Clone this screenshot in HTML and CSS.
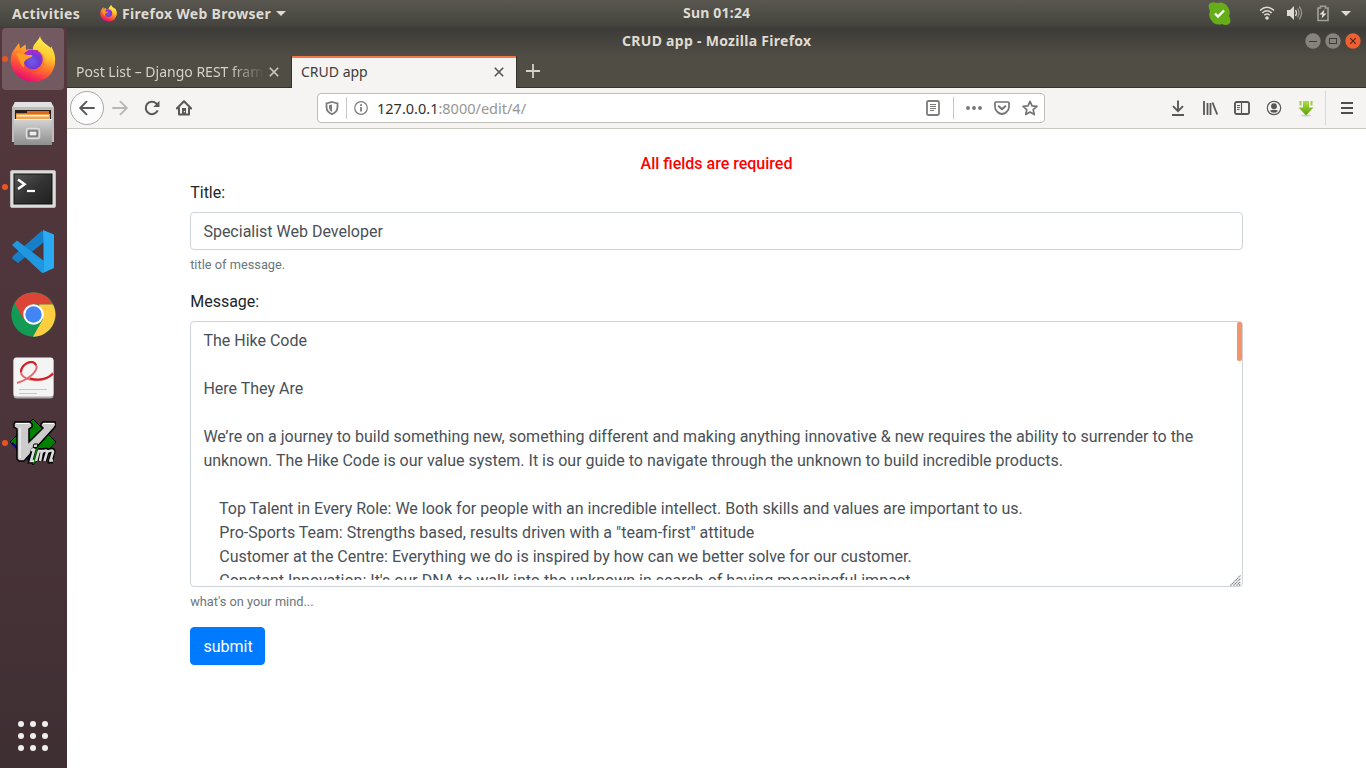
FILE: index.html
```html
<!DOCTYPE html>
<html lang="en">
<head>
<meta charset="utf-8">
<title>CRUD app</title>
<link rel="stylesheet" href="styles.css">
</head>
<body>
<svg class="defs" width="0" height="0">
  <defs>
    <linearGradient id="foxBody" x1="0.8" y1="0" x2="0.3" y2="1"><stop offset="0" stop-color="#fff44f"/><stop offset=".3" stop-color="#ffa52b"/><stop offset=".65" stop-color="#ff5534"/><stop offset="1" stop-color="#e8017d"/></linearGradient>
    <linearGradient id="foxTail" x1=".6" y1="0" x2=".4" y2="1"><stop offset="0" stop-color="#fff352"/><stop offset=".5" stop-color="#ffc92e"/><stop offset=".8" stop-color="#ff7a2a"/><stop offset="1" stop-color="#ff4a42"/></linearGradient>
    <radialGradient id="foxGlobe" cx=".45" cy=".6" r=".65"><stop offset="0" stop-color="#6b5cf2"/><stop offset=".6" stop-color="#7138cf"/><stop offset="1" stop-color="#a834c8"/></radialGradient>
    <linearGradient id="silver" x1="0" y1="0" x2="0" y2="1"><stop offset="0" stop-color="#d4d4d4"/><stop offset="1" stop-color="#8e8e8e"/></linearGradient>
    <linearGradient id="termFill" x1="0" y1="0" x2="1" y2="1"><stop offset="0" stop-color="#555"/><stop offset=".5" stop-color="#333"/><stop offset="1" stop-color="#202020"/></linearGradient>
    <linearGradient id="greenArrow" x1="0" y1="0" x2="0" y2="1"><stop offset="0" stop-color="#a9e03e"/><stop offset="1" stop-color="#5f9e0c"/></linearGradient>
    <symbol id="firefox" viewBox="0 0 46 48">
      <path fill="url(#foxBody)" d="M3 16 L9 8 L10 13.500 L15.500 9.500 L16 15 Q23 12 28 18 L29 9 L40 12 C47 21 47 34 38 42 C29 49 16 48 8 41 C0 34-1 24 3 16Z"/>
      <path fill="url(#foxTail)" d="M30 1 C29 6 22 9 23 15 C32 14 37 22 34 29 C32 36 26 38 20 37 C32 45 44 38 45 27 C46 20 43 15 41 11 L41 15 C39 9 31 8 30 1Z"/>
      <circle cx="23" cy="24.500" r="9.800" fill="url(#foxGlobe)"/>
      <path fill="#ff9d22" d="M6 19 C10 16 14 20 22 20 C24 22 18 23 16 25 C13 27 14 30 14 33 C9 29 9 22 6 19Z"/>
      <path fill="#a32bd2" d="M14 19 Q18 13 24 15 Q31 17 28 21 Q22 16 19 20Z"/>
    </symbol>
  </defs>
</svg>

<header class="topbar">
  <span class="activities">Activities</span>
  <div class="app-menu">
    <svg width="17" height="18"><use href="#firefox"/></svg>
    <span class="app-name">Firefox Web Browser</span>
    <i class="caret"></i>
  </div>
  <span class="clock">Sun 01:24</span>
  <div class="tray">
    <svg class="skype" width="23" height="23" viewBox="0 0 23 23"><path fill="#65ad19" d="M1 2 Q4-1 9 1 Q16-1 20 5 Q23 10 21 14 Q24 19 21 22 Q18 24 14 22 Q7 24 3 18 Q0 14 2 9 Q0 6 1 2Z"/><path d="M7 11.500 10 14.500 16 8.500" fill="none" stroke="#fff" stroke-width="2.400"/></svg>
    <svg class="wifi" width="16" height="16" viewBox="0 0 16 16" fill="none" stroke="#dfdcd6" stroke-width="1.500"><path d="M1 5.500Q8-1 15 5.500M3.300 8Q8 3.600 12.700 8M5.300 10.300Q8 7.800 10.700 10.300"/><circle cx="8" cy="13" r="1.800" fill="#dfdcd6" stroke="none"/></svg>
    <svg class="sound" width="17" height="16" viewBox="0 0 17 16"><path fill="#dfdcd6" d="M1 5H4L8 1V15L4 11H1Z"/><path fill="none" stroke="#dfdcd6" stroke-width="1.300" d="M9.500 5Q11.500 8 9.500 11"/><path fill="none" stroke="#98958d" stroke-width="1.300" d="M11.500 3.500Q14.500 8 11.500 12.500M13.300 1.500Q18 8 13.300 14.500"/></svg>
    <svg class="battery" width="14" height="17" viewBox="0 0 14 17"><path fill="none" stroke="#a3a099" stroke-width="1.600" d="M2 3H4.500V1.200H9.500V3H12V15.500H2Z"/><path fill="#e8e5df" d="M8.500 4.500 3.500 9.500H6.500L5.500 13.500 10.500 8.500H7.500Z"/></svg>
    <i class="caret"></i>
  </div>
</header>

<div class="desktop">
  <nav class="dock">
    <div class="slot active running"><svg width="46" height="48"><use href="#firefox"/></svg></div>
    <div class="slot files">
      <svg width="42" height="44" viewBox="0 0 42 44"><path fill="#bdbdbd" d="M3 0H39L42 5V40H0V5Z"/><path fill="#e2e2e2" d="M3 0H39L41 5H1Z"/><rect x="3" y="8" width="36" height="10" fill="#2a211c"/><path fill="#d76b22" d="M4 11H15V9H37V17H4Z"/><path fill="#f6a44c" d="M4 12H38V17H4Z"/><path fill="#fff" d="M5 13.200H37V14.400H5Z"/><rect x="2" y="17" width="38" height="26" fill="url(#silver)"/><path fill="#eee" d="M2 17H40V18H2Z"/><rect x="14.500" y="26.500" width="13" height="10" rx="2" fill="#aaa" stroke="#ddd" stroke-width="1.500"/><rect x="17" y="29" width="8" height="5" fill="#eee" stroke="#555"/></svg>
    </div>
    <div class="slot running terminal">
      <svg width="46" height="38" viewBox="0 0 46 38"><rect x=".5" y=".5" width="45" height="37" rx="1.500" fill="#dcdcdc" stroke="#b9b9b9"/><rect x="4" y="4" width="38" height="30" fill="url(#termFill)" stroke="#111"/><path d="M8 9.500 14.500 14.300 8 19" fill="none" stroke="#fff" stroke-width="2.600"/><path d="M17 21H25" stroke="#fff" stroke-width="2.200"/></svg>
    </div>
    <div class="slot">
      <svg width="42" height="43" viewBox="0 0 42 43"><path fill="#1580c8" d="M30 .5 34 6 32 12 6 33 0 28.500 1 26Z"/><path fill="#2aaaf2" d="M31 0 42 4.500V38L31 43 31.500 32V12Z"/><path fill="#1f97e1" d="M0 15 5 10.500 32 31 31 43Q30 43 29 42Z"/></svg>
    </div>
    <div class="slot">
      <svg width="45" height="45" viewBox="0 0 45 45"><circle cx="22.500" cy="22.500" r="22.200" fill="#129b54"/><path fill="#dc4437" d="M3.500 11 A22.200 22.200 0 0 1 42 12.500H22.500L13 28Z"/><path fill="#ffcd40" d="M42 12.500 A22.200 22.200 0 0 1 22 44.700L32 27 28 12.500Z"/><circle cx="22.500" cy="22.500" r="10.300" fill="#fff"/><circle cx="22.500" cy="22.500" r="8.200" fill="#4285f4"/></svg>
    </div>
    <div class="slot">
      <svg width="41" height="42" viewBox="0 0 41 42"><rect x=".5" y="1.500" width="40" height="40" rx="3" fill="#aaa"/><rect x=".5" y=".5" width="40" height="39" rx="3" fill="#f4f4f4"/><path d="M4 26C17 22 26 13 23 8C20 2 10 6 8 14C7 20 16 24 26 23Q35 22 40 16" fill="none" stroke="#e3686b" stroke-width="2"/><path d="M8 15C8 7 20 1 23 8M17 21.500Q31 25 40 17" fill="none" stroke="#cd2026" stroke-width="2"/><path d="M6 32.500H34M6 36.500H24" stroke="#c5c5c5"/></svg>
    </div>
    <div class="slot running">
      <svg width="46" height="48" viewBox="0 0 46 48"><path fill="#008000" stroke="#000" d="M23 1 46 24 23 47 0 24Z"/><path fill="none" stroke="#0a0a78" stroke-width="2.500" d="M2 25 23 45.500"/><path fill="#ccc" stroke="#000" stroke-width="1.500" d="M5 4H20L22 6V9L19 11V24L33 10 31 8V6L33 4H45L46 7 44 10 14 43H9L7 41V11L4 9V6Z"/><path fill="none" stroke="#fff" d="M6 5.500H19M10 10V40M33 5.500H44"/><g fill="none" stroke="#000" stroke-width="5"><path d="M23.500 31 20.500 43H23M27 43 30 32.500H33L30 43M32 34Q37 30 37 34L34.500 43M37 34Q43 30 43 34L40.500 43H43"/></g><g fill="none" stroke="#ddd" stroke-width="2.600"><path d="M21 32H24L21 43H24M26 43 29 32.500M28 33H32L30 43M32 34Q37 31 37 34L34.500 43M37 34Q43 31 43 34L40.500 42.500H43"/></g><path fill="#ddd" stroke="#000" d="M24 26H28L27 29.500H23Z"/></svg>
    </div>
    <div class="apps-grid"><i></i><i></i><i></i><i></i><i></i><i></i><i></i><i></i><i></i></div>
  </nav>

  <main class="window">
    <div class="titlebar">
      <span class="title">CRUD app - Mozilla Firefox</span>
      <div class="controls">
        <svg width="16" height="16" viewBox="0 0 16 16"><circle cx="8" cy="8" r="7.700" fill="#85837c"/><path d="M4 8.500H12" stroke="#3c3b37"/></svg>
        <svg width="16" height="16" viewBox="0 0 16 16"><circle cx="8" cy="8" r="7.700" fill="#85837c"/><rect x="4.500" y="5.500" width="7" height="5" fill="none" stroke="#3c3b37"/></svg>
        <svg width="16" height="16" viewBox="0 0 16 16"><circle cx="8" cy="8" r="7.700" fill="#ee5f31"/><path d="M5.200 5.200 10.800 10.800M10.800 5.200 5.200 10.800" stroke="#4b2a1e" stroke-width="1.200"/></svg>
      </div>
    </div>
    <div class="tabs">
      <div class="tab"><span class="tab-text faded">Post List – Django REST fram</span><svg width="10" height="10" viewBox="0 0 10 10"><path d="M.8.8 9.200 9.200M9.200.8.8 9.200" stroke="#cfccc4" stroke-width="1.600"/></svg></div>
      <div class="tab current"><span class="tab-text">CRUD app</span><svg width="10" height="10" viewBox="0 0 10 10"><path d="M.8.8 9.200 9.200M9.200.8.8 9.200" stroke="#55544f" stroke-width="1.600"/></svg></div>
      <svg class="plus" width="14" height="14" viewBox="0 0 14 14"><path d="M7 0V14M0 7H14" stroke="#d5d2ca" stroke-width="1.800"/></svg>
    </div>
    <div class="toolbar">
      <div class="back"><svg width="16" height="16" viewBox="0 0 16 16" fill="none" stroke="#585856" stroke-width="1.900" stroke-linecap="round" stroke-linejoin="round"><path d="M15 8H1.500M7.500 1.700 1.200 8 7.500 14.300"/></svg></div>
      <svg width="16" height="16" viewBox="0 0 16 16" fill="none" stroke="#b8b8b6" stroke-width="1.900" stroke-linecap="round" stroke-linejoin="round"><path d="M1 8H14.500M8.500 1.700 14.800 8 8.500 14.300"/></svg>
      <svg width="16" height="16" viewBox="0 0 16 16"><path d="M13.700 10.300A6.200 6.200 0 1 1 12.300 3.500L14 5" fill="none" stroke="#585856" stroke-width="2"/><path d="M15.500.8V7H9.300Z" fill="#585856"/></svg>
      <svg width="16" height="16" viewBox="0 0 16 16"><path d="M.8 8.500 8 1.200 15.200 8.500M3 8V14.500H13V8" fill="none" stroke="#585856" stroke-width="2" stroke-linecap="round" stroke-linejoin="round"/><path d="M6 8H10V14H6Z" fill="#585856"/><path d="M7.800 11H9V12.300H7.800Z" fill="#f5f4f2"/></svg>
      <div class="urlbar">
        <svg width="14" height="14" viewBox="0 0 14 14"><path d="M7 1 12.500 2.500V6Q12.500 11 7 13.200Q1.500 11 1.500 6V2.500Z" fill="none" stroke="#7c7c7a" stroke-width="1.800"/><path fill="#7c7c7a" d="M7 3.500V11Q4 9.500 4 6V4.300Z"/></svg>
        <i class="rule"></i>
        <svg width="14" height="14" viewBox="0 0 14 14"><circle cx="7" cy="7" r="6.300" fill="none" stroke="#7c7c7a" stroke-width="1.200"/><path d="M7 6V10.500M7 3.300V4.900" stroke="#7c7c7a" stroke-width="1.800"/></svg>
        <span class="url"><b>127.0.0.1</b>:8000/edit/4/</span>
        <div class="page-actions">
          <svg width="14" height="16" viewBox="0 0 14 16"><rect x="1" y="1" width="12" height="14" rx="1.500" fill="none" stroke="#7c7c7a" stroke-width="1.800"/><path d="M4 4.500H10M4 6.500H10M4 8.500H10M4 10.500H8" stroke="#7c7c7a"/></svg>
          <i class="rule"></i>
          <svg class="dots" width="16" height="4" viewBox="0 0 16 4" fill="#747472"><circle cx="2" cy="2" r="1.900"/><circle cx="8" cy="2" r="1.900"/><circle cx="14" cy="2" r="1.900"/></svg>
          <svg width="16" height="14" viewBox="0 0 16 14" fill="none" stroke="#747472" stroke-linecap="round" stroke-linejoin="round"><path d="M2 1H14Q15 1 15 2V6Q15 9 12.500 11Q8 15 3.500 11Q1 9 1 6V2Q1 1 2 1Z" stroke-width="1.700"/><path d="M4.700 5.200 8 8.300 11.300 5.200" stroke-width="2"/></svg>
          <svg width="16" height="16" viewBox="0 0 16 16"><path d="M8 1.300 10 5.800 15 6.300 11.200 9.600 12.300 14.600 8 12 3.700 14.600 4.800 9.600 1 6.300 6 5.800Z" fill="none" stroke="#747472" stroke-width="1.700" stroke-linejoin="round"/></svg>
        </div>
      </div>
      <div class="tools">
        <svg width="16" height="16" viewBox="0 0 16 16" fill="none" stroke="#585856" stroke-width="1.900"><path d="M8 .5V11M3 6.200 8 11.200 13 6.200M2 15H14"/></svg>
        <svg width="16" height="16" viewBox="0 0 16 16" fill="none" stroke="#585856" stroke-width="1.800"><path d="M2 1V15M5.500 3V15M8.500 3V15M10.500 2.500 15.200 14.500"/></svg>
        <svg width="16" height="14" viewBox="0 0 16 14" fill="none" stroke="#585856"><rect x="1" y="1" width="14" height="12" rx="1.800" stroke-width="1.900"/><path d="M7.500 1V13M3 4.500H6M3 6.500H6M3 8.500H5.500" stroke-width="1.200"/></svg>
        <svg width="16" height="16" viewBox="0 0 16 16"><circle cx="8" cy="8" r="6.700" fill="none" stroke="#585856" stroke-width="1.200"/><circle cx="8" cy="6.200" r="2.900" fill="#585856"/><path d="M4 10.800Q8 8.500 12 10.800Q11 12.800 8 12.800T4 10.800Z" fill="#585856"/></svg>
        <svg width="16" height="17" viewBox="0 0 16 17"><ellipse cx="8" cy="15.500" rx="5" ry="1" fill="#ccc"/><path d="M5 1H11V7.500H15.500L8 15.500.5 7.500H5Z" fill="url(#greenArrow)"/><path d="M1.500 1H3.500V5.500H1.500ZM12.500 1H14.500V5.500H12.500Z" fill="#9bd03b"/></svg>
        <i class="rule tall"></i>
        <svg width="12" height="12" viewBox="0 0 12 12" stroke="#4e4e4c" stroke-width="2"><path d="M0 1H12M0 6H12M0 11H12"/></svg>
      </div>
    </div>

    <form class="page">
      <strong class="error">All fields are required</strong>
      <div class="group">
        <label>Title:</label>
        <div class="field">Specialist Web Developer</div>
        <small>title of message.</small>
      </div>
      <div class="group">
        <label>Message:</label>
        <div class="field area"><div class="area-text">The Hike Code

Here They Are

We’re on a journey to build something new, something different and making anything innovative &amp; new requires the ability to surrender to the
unknown. The Hike Code is our value system. It is our guide to navigate through the unknown to build incredible products.

    Top Talent in Every Role: We look for people with an incredible intellect. Both skills and values are important to us.
    Pro-Sports Team: Strengths based, results driven with a "team-first" attitude
    Customer at the Centre: Everything we do is inspired by how can we better solve for our customer.
    Constant Innovation: It's our DNA to walk into the unknown in search of having meaningful impact.</div>
          <i class="thumb"></i>
          <svg class="grip" width="11" height="11" viewBox="0 0 11 11" stroke="#777" stroke-width="1.100" stroke-dasharray="1.400 .5"><path d="M.5 10.500 10.500.5M3.500 10.500 10.500 3.500M6.500 10.500 10.500 6.500M9 10.500 10.500 9"/></svg>
        </div>
        <small>what's on your mind...</small>
      </div>
      <button type="button" class="submit">submit</button>
    </form>
  </main>
</div>
</body>
</html>
```
FILE: styles.css
```css
* { box-sizing: border-box; }
body { margin: 0; width: 1366px; height: 768px; overflow: hidden; background: #fff; font-family: "Noto Sans", sans-serif; }
svg { display: block; flex: none; }
.defs { position: absolute; }

.topbar {
  height: 28px; padding: 0 15px 2px 12px; display: grid; grid-template-columns: 88px 583px 1fr auto; align-items: center;
  background: linear-gradient(#595750, #45443e 90%, #3e3d38);
  color: #dfdbd2; font-weight: 700; font-size: 14px; line-height: 20px; white-space: nowrap;
}
.activities { letter-spacing: .3px; padding-top: 1px; }
.app-menu { display: flex; align-items: center; }
.app-name { margin-left: 5px; width: 149px; padding-top: 1px; letter-spacing: .3px; }
.clock { letter-spacing: .2px; }
.caret { border: 5px solid transparent; border-top-color: #dfdbd2; border-bottom: 0; margin-left: 5px; }
.tray { display: flex; align-items: center; }
.wifi { margin-left: 28px; }
.sound { margin-left: 11px; }
.battery { margin-left: 13px; }
.tray .caret { margin-left: 11px; }

.desktop { display: flex; height: 740px; }
.dock { width: 67px; flex: none; display: flex; flex-direction: column; background: linear-gradient(#54383d, #4b343a 55%, #3e2f33); }
.slot { position: relative; width: 62px; height: 62px; margin: 0 0 2px 2px; border-radius: 4px; display: flex; align-items: center; justify-content: center; }
.slot.active { background: #735a60; }
.slot.files { padding-top: 1px; }
.slot.terminal { padding-top: 4px; }
.slot:nth-child(n+5) { padding-bottom: 2px; }
.running::before { content: ""; position: absolute; left: 0; top: 28px; width: 6px; height: 6px; border-radius: 50%; background: #e95420; }
.apps-grid { margin: auto 0 17px 18px; display: grid; grid-template-columns: repeat(3, 6px); gap: 6px; }
.apps-grid i { width: 6px; height: 6px; border-radius: 50%; background: #f1efee; }

.window { flex: 1; min-width: 0; display: flex; flex-direction: column; }
.titlebar { height: 28px; display: grid; grid-template-columns: 1fr auto; align-items: center; background: linear-gradient(#3c3b37, #4f4c44); padding: 0 5px 2px 555px; color: #dfdbd2; font-weight: 700; font-size: 14px; line-height: 20px; letter-spacing: .29px; }
.controls { display: flex; gap: 4px; }
.tabs { height: 32px; display: flex; background: #504d45; border-bottom: 1px solid #33322e; }
.tab { width: 224px; height: 32px; display: flex; align-items: center; justify-content: space-between; padding: 0 12px 0 9px; color: #d5d2ca; font-size: 14px; line-height: 20px; white-space: nowrap; }
.tab.current { width: 226px; background: #f5f4f2; color: #3c3c3c; border: 1px solid #33322e; border-bottom: 0; border-top: 0; box-shadow: inset 0 2px #f07746; padding: 0 12px 0 9px; }
.tab-text { width: 187px; overflow: hidden; }
.faded { -webkit-mask-image: linear-gradient(90deg, #000 82%, transparent 101%); mask-image: linear-gradient(90deg, #000 82%, transparent 101%); }
.plus { margin: 8px 0 0 9px; }
.toolbar { height: 41px; background: #f5f4f2; border-bottom: 1px solid #c9c5c0; display: flex; align-items: center; padding-left: 3px; }
.back { width: 34px; height: 34px; border: 1px solid #a9a8a6; border-radius: 50%; background: #fdfdfd; display: flex; align-items: center; justify-content: center; margin-right: 8px; }
.toolbar > svg { margin-right: 16px; }
.urlbar { width: 728px; height: 30px; margin-left: 109px; border: 1px solid #c1beb9; border-radius: 4px; background: #fff; display: flex; align-items: center; padding: 0 6px 0 7px; }
.rule { width: 1px; height: 22px; background: #c8c6c4; }
.urlbar > .rule { margin: 0 7px; }
.url { margin-left: 9px; font-size: 14.5px; line-height: 20px; color: #969694; }
.url b { font-weight: 400; color: #303030; }
.page-actions { margin-left: auto; display: flex; align-items: center; }
.page-actions .rule { margin: 0 12px 0 13px; }
.dots { margin-right: 12px; }
.page-actions svg:last-child { margin-left: 12px; }
.tools { margin-left: 125px; display: flex; align-items: center; gap: 16px; }
.rule.tall { height: 34px; margin: 0 -1px 0 -5px; background: #dad8d6; }

.page { padding: 23px 123px 0; font: 16px/24px Roboto, sans-serif; color: #212529; }
.error { display: block; text-align: center; color: #f00; font-weight: 500; margin-bottom: 5px; }
label { display: block; margin-bottom: 7px; padding-left: .2px; }
.field { height: 38px; border: 1px solid #ced4da; border-radius: 4px; padding: 7px 12px 5px 12.4px; color: #495057; }
.area { position: relative; height: 266px; }
.area-text { height: 251px; overflow: hidden; white-space: pre; letter-spacing: .004px; }
.thumb { position: absolute; right: 0; top: 0; width: 5px; height: 39px; border-radius: 2px; background: #f3946d; }
.grip { position: absolute; right: 1px; bottom: 0; }
.group small { display: block; font-size: 12.8px; line-height: 19px; height: 20px; margin: 4px 0 16px; padding: 1px 0 0 .2px; color: #6c757d; }
.submit { display: block; width: 75px; height: 38px; border: 1px solid #007bff; border-radius: 4px; padding: 1px 0 0 1px; background: #007bff; color: #fff; font: 16px/24px Roboto, sans-serif; }
```
